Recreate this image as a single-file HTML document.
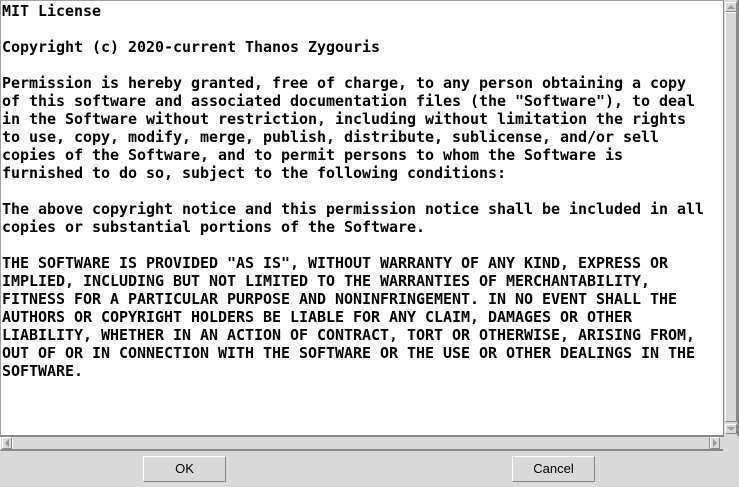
<!DOCTYPE html><html><head><style>
body{margin:0;width:739px;height:487px;background:#d9d9d9;position:relative;overflow:hidden;font-family:"DejaVu Sans Mono",monospace}
#ta{position:absolute;left:0;top:0;width:722px;height:434px;background:#fff;border-top:1px solid #a0a0a0;border-left:1px solid #a0a0a0;border-right:1px solid #888;border-bottom:2px solid #888;box-sizing:content-box}
pre{margin:0;padding:1px 1px;font:bold 15px/18px "DejaVu Sans Mono",monospace;letter-spacing:-0.03px;color:#000}
#vs{position:absolute;left:724px;top:0;width:13px;height:436px;background:#d9d9d9;border-right:2px solid #888}
#hs{position:absolute;left:0;top:437px;width:722px;height:12px;background:#d9d9d9;border-bottom:2px solid #888;border-left:1px solid #fff}
.ab{position:absolute;background:#d9d9d9;border:1px solid #fff;border-right-color:#888;border-bottom-color:#888}
.btn{position:absolute;top:456px;width:81px;height:24px;border:1px solid #fff;border-right-color:#888;border-bottom-color:#888;background:#d9d9d9;font:13px "Liberation Sans",sans-serif;text-align:center;line-height:24px;color:#000}
</style></head><body>
<div id="ta"><pre>MIT License

Copyright (c) 2020-current Thanos Zygouris

Permission is hereby granted, free of charge, to any person obtaining a copy
of this software and associated documentation files (the "Software"), to deal
in the Software without restriction, including without limitation the rights
to use, copy, modify, merge, publish, distribute, sublicense, and/or sell
copies of the Software, and to permit persons to whom the Software is
furnished to do so, subject to the following conditions:

The above copyright notice and this permission notice shall be included in all
copies or substantial portions of the Software.

THE SOFTWARE IS PROVIDED "AS IS", WITHOUT WARRANTY OF ANY KIND, EXPRESS OR
IMPLIED, INCLUDING BUT NOT LIMITED TO THE WARRANTIES OF MERCHANTABILITY,
FITNESS FOR A PARTICULAR PURPOSE AND NONINFRINGEMENT. IN NO EVENT SHALL THE
AUTHORS OR COPYRIGHT HOLDERS BE LIABLE FOR ANY CLAIM, DAMAGES OR OTHER
LIABILITY, WHETHER IN AN ACTION OF CONTRACT, TORT OR OTHERWISE, ARISING FROM,
OUT OF OR IN CONNECTION WITH THE SOFTWARE OR THE USE OR OTHER DEALINGS IN THE
SOFTWARE.</pre></div>
<div id="vs">
<div class="ab" style="left:1px;top:2px;width:10px;height:8px"><svg width="10" height="8" style="position:absolute;left:0;top:0"><path d="M1 6L5 2L9 6Z" fill="#999"/></svg></div>
<div class="ab" style="left:1px;top:12px;width:10px;height:408px"></div>
<div class="ab" style="left:1px;top:424px;width:10px;height:8px"><svg width="10" height="8" style="position:absolute;left:0;top:0"><path d="M1 2L5 6L9 2Z" fill="#999"/></svg></div>
</div>
<div id="hs">
<div class="ab" style="left:1px;top:0;width:8px;height:10px"><svg width="8" height="10" style="position:absolute;left:0;top:0"><path d="M6 1L2 5L6 9Z" fill="#999"/></svg></div>
<div class="ab" style="left:11px;top:0;width:696px;height:10px;border-top-color:#d9d9d9;border-bottom-color:#d9d9d9;border-right-color:#888"></div>
<div class="ab" style="left:709px;top:0;width:8px;height:10px"><svg width="8" height="10" style="position:absolute;left:0;top:0"><path d="M2 1L6 5L2 9Z" fill="#999"/></svg></div>
</div>
<div class="btn" style="left:143px">OK</div>
<div class="btn" style="left:512px">Cancel</div>
</body></html>
